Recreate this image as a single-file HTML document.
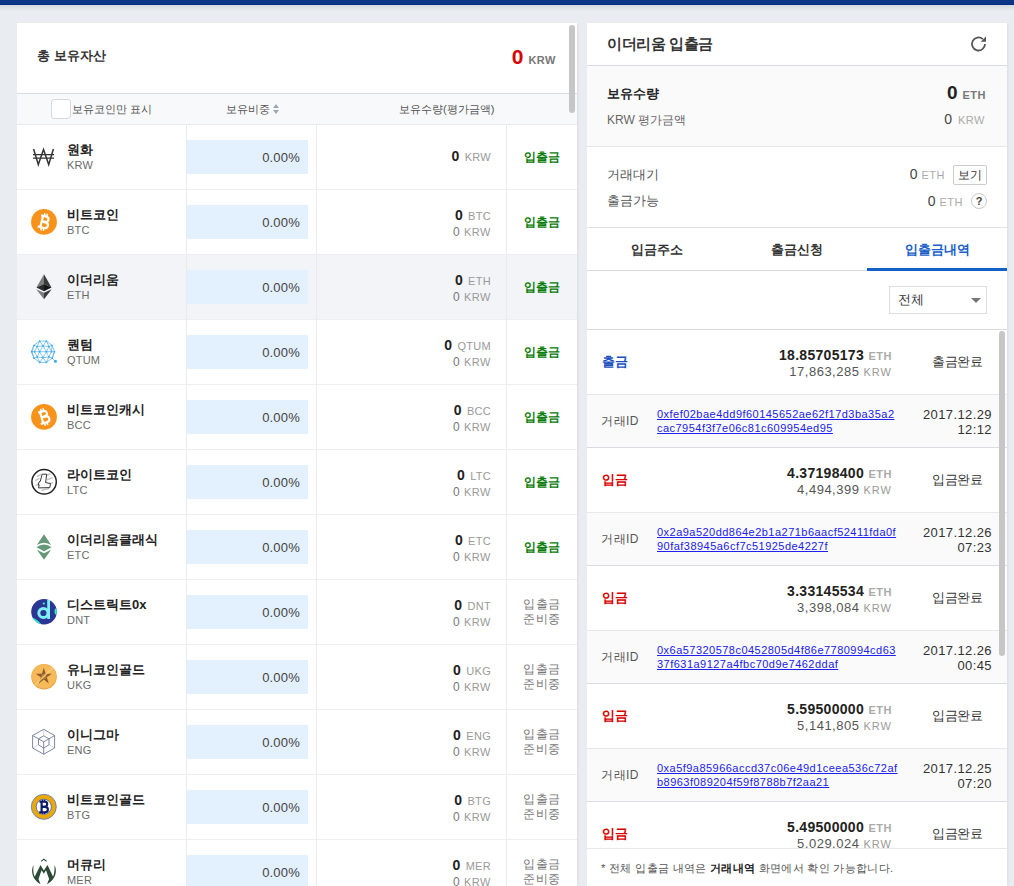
<!DOCTYPE html>
<html><head><meta charset="utf-8">
<style>
*{margin:0;padding:0;box-sizing:border-box}
html,body{width:1014px;height:886px;overflow:hidden}
body{background:#e9ecf1;font-family:"Liberation Sans",sans-serif;color:#333;position:relative}
.topbar{position:absolute;left:0;top:0;width:1014px;height:5px;background:#0b3585;border-bottom:1px solid #002b85}
.topshadow{position:absolute;left:0;top:5px;width:1014px;height:6px;background:linear-gradient(#d5d8de,#e9ecf1)}
.panel{position:absolute;background:#fff;overflow:hidden;box-shadow:2px 0 2px -1px rgba(40,50,80,0.08)}
#left{left:17px;top:23px;width:560px;height:863px}
#right{left:587px;top:23px;width:420px;height:863px}
/* left */
.lh{position:absolute;left:0;top:0;width:560px;height:71px;border-bottom:1px solid #d8dbe0}
.lh .ttl{position:absolute;left:20px;top:24px;font-size:13px;letter-spacing:0px;word-spacing:0px;font-weight:bold;color:#333;line-height:18px}
.lh .tot{position:absolute;right:21px;top:22px;line-height:24px;white-space:nowrap}
.lh .tot b{font-size:21px;color:#d80000}
.lh .tot span{font-size:11px;color:#777;font-weight:bold;margin-left:5px;letter-spacing:0.5px}
.th{position:absolute;left:0;top:71px;width:560px;height:31px;background:#f8f9fb;border-bottom:1px solid #e9ebef;font-size:11px;color:#555;line-height:30px}
.cb{position:absolute;left:34px;top:5px;width:20px;height:20px;border:1px solid #d6d8de;border-radius:3px;background:#fff}
.th .c1{position:absolute;left:55px;top:0}
.th .c2{position:absolute;left:209px;top:0}
.th .c3{position:absolute;left:382px;top:0}
.sort{display:inline-block;vertical-align:middle;margin-left:3px;width:6px;height:10px;position:relative;top:-1px}
.row{position:absolute;left:0;width:560px;height:65px;border-bottom:1px solid #edeef1}
.row.hl{background:#f3f4f8}
.row::before{content:"";position:absolute;left:169px;top:0;width:1px;height:64px;background:#e9eaf2}
.row::after{content:"";position:absolute;left:299px;top:0;width:1px;height:64px;background:#e9eaf2}
.row .vb{position:absolute;left:489px;top:0;width:1px;height:64px;background:#e9eaf2}
.ic{position:absolute;left:11px;top:16px;width:32px;height:32px}.ic svg{display:block}
.nm{position:absolute;left:50px;top:17px;font-size:13px;font-weight:bold;color:#222;line-height:15px;letter-spacing:0px;white-space:nowrap}
.tk{position:absolute;left:50px;top:34px;font-size:11px;color:#6a6a6a;line-height:13px;letter-spacing:0.2px}
.bar{position:absolute;left:170px;top:15px;width:121px;height:34px;background:#e3f0fd;text-align:right;padding-right:8px;font-size:13px;line-height:36px;color:#444;letter-spacing:0.2px}
.q1{position:absolute;right:86px;top:17px;font-size:11px;color:#999;line-height:16px;white-space:nowrap;letter-spacing:0.3px}
.q1 b{font-size:14px;color:#222;letter-spacing:0}
.q1.single{top:23px}
.q2{position:absolute;right:86px;top:35px;font-size:12px;color:#777;line-height:15px;white-space:nowrap;letter-spacing:0.5px}
.q2 .u{font-size:11px;color:#999}
.q1 .u{margin-left:2px}
.act{position:absolute;left:490px;width:70px;text-align:center;font-size:12px;line-height:15px}
.act.on{top:25px;color:#0a7d0a;font-weight:bold}
.act.off{top:17px;color:#777;letter-spacing:0.5px}
.sb{position:absolute;border-radius:3px;background:#c6c6c6}
/* right */
.rh{position:absolute;left:0;top:0;width:420px;height:43px;border-bottom:1px solid #d8dbe0}
.rh .ttl{position:absolute;left:20px;top:12px;font-size:15px;letter-spacing:-0.4px;font-weight:bold;line-height:18px;color:#333}
.refresh{position:absolute;left:383px;top:12px}
.hold{position:absolute;left:0;top:43px;width:420px;height:81px;background:#fafafa;border-bottom:1px solid #e5e7eb}
.hold .l1{position:absolute;left:20px;top:19px;font-size:13px;font-weight:bold;line-height:17px;color:#222}
.hold .l2{position:absolute;left:20px;top:46px;font-size:12px;line-height:16px;color:#666}
.hold .r1{position:absolute;right:21px;top:16px;line-height:22px;white-space:nowrap}
.hold .r1 b{font-size:19px;color:#222}
.hold .r1 span{font-size:11px;color:#777;font-weight:bold;margin-left:5px;letter-spacing:0.5px}
.hold .r2{position:absolute;right:22px;top:44px;line-height:18px;white-space:nowrap;font-size:14px;color:#444}
.hold .r2 span{font-size:11px;color:#aaa;margin-left:6px;letter-spacing:0.5px}
.pend{position:absolute;left:0;top:124px;width:420px;height:81px;border-bottom:1px solid #dfe1e6}
.pend .l{position:absolute;left:20px;font-size:13px;color:#555;line-height:16px}
.pend .v{position:absolute;font-size:14px;color:#444;line-height:18px;white-space:nowrap}
.pend .v span{font-size:11px;color:#aaa;margin-left:4px;letter-spacing:0.5px}
.btn{position:absolute;left:366px;top:18px;width:34px;height:20px;border:1px solid #ccc;border-radius:2px;font-size:12px;line-height:18px;text-align:center;color:#333;background:#fff}
.q{position:absolute;left:384px;top:46px;width:16px;height:16px;border:1px solid #c8c8c8;border-radius:50%;font-size:11px;font-weight:bold;line-height:14px;text-align:center;color:#444}
.tabs{position:absolute;left:0;top:205px;width:420px;height:43px;border-bottom:1px solid #d8dbe0}
.tab{position:absolute;top:0;width:140px;height:42px;text-align:center;font-size:13px;font-weight:bold;line-height:43px;color:#333}
.tab.on{color:#1a5ec8;border-bottom:3px solid #1261c4;height:43px}
.filt{position:absolute;left:0;top:248px;width:420px;height:59px;border-bottom:1px solid #d8dbe0}
.sel{position:absolute;left:302px;top:15px;width:98px;height:28px;border:1px solid #ddd;font-size:13px;line-height:26px;padding-left:8px;color:#333;background:#fff}
.sel::after{content:"";position:absolute;left:81px;top:11px;border-left:5px solid transparent;border-right:5px solid transparent;border-top:5px solid #777}
.list{position:absolute;left:0;top:307px;width:420px;height:518px;overflow:hidden}
.tx{position:absolute;left:0;width:420px;height:65px;background:#fff;border-bottom:1px solid #e8e8ea}
.tx .tt{position:absolute;left:15px;top:24px;font-size:13px;font-weight:bold;line-height:16px}
.tt.out{color:#1a4fc0}.tt.in{color:#d80000}
.amt{position:absolute;right:115px;top:16px;line-height:18px;white-space:nowrap}
.amt b{font-size:14px;color:#222;letter-spacing:0.3px}
.amt .eu{font-size:11px;font-weight:bold;color:#aaa;letter-spacing:0.5px}
.krw{position:absolute;right:115px;top:34px;line-height:16px;white-space:nowrap;font-size:13px;color:#555;letter-spacing:0.5px}
.krw .ku{font-size:11px;color:#999;letter-spacing:1px}
.st{position:absolute;left:326px;width:88px;top:24px;text-align:center;font-size:13px;line-height:16px;color:#333;letter-spacing:-0.5px}
.txid{position:absolute;left:0;width:420px;height:53px;background:#fafafa;border-bottom:1px solid #d8dbe0}
.idl{position:absolute;left:14px;top:19px;font-size:12px;color:#555;line-height:14px;letter-spacing:0.5px}
.idv{position:absolute;left:70px;top:12px;font-size:11px;line-height:14px;letter-spacing:0.47px}
.idv a{color:#2020ee;text-decoration:underline}
.dt{position:absolute;right:15px;top:12px;text-align:right;font-size:13px;line-height:15px;color:#333;letter-spacing:0.4px}
.foot{position:absolute;left:0;top:825px;width:420px;height:38px;border-top:1px solid #e8e8ea;background:#fff;font-size:11.4px;letter-spacing:0.3px;color:#555;padding-left:14px;line-height:38px}
.foot b{color:#222}
</style></head><body>
<div class="topbar"></div><div class="topshadow"></div>
<div class="panel" id="left">
 <div class="lh"><div class="ttl">총 보유자산</div><div class="tot"><b>0</b><span>KRW</span></div></div>
 <div class="th"><div class="cb"></div><div class="c1">보유코인만 표시</div><div class="c2">보유비중<svg class="sort" viewBox="0 0 6 10"><path d="M3 0 L6 4 H0Z M3 10 L6 6 H0Z" fill="#a0a5b5"/></svg></div><div class="c3">보유수량(평가금액)</div></div>
<div class="row" style="top:102px">
<div class="vb"></div><div class="ic"><svg width="32" height="32" viewBox="0 0 32 32"><g fill="none" stroke="#333" stroke-width="1.5"><path d="M5.6 8 L10.3 23.6 L15.5 8.6 L20.7 23.6 L25.4 8"/></g><path d="M5 13.6 H26 M5 17.1 H26" stroke="#333" stroke-width="1.4"/></svg></div>
<div class="nm">원화</div><div class="tk">KRW</div>
<div class="bar"><span>0.00%</span></div>
<div class="q1 single"><b>0</b> <span class="u">KRW</span></div>
<div class="act on">입출금</div>
</div>
<div class="row" style="top:167px">
<div class="vb"></div><div class="ic"><svg width="32" height="32" viewBox="0 0 32 32"><circle cx="16" cy="15.9" r="12.9" fill="#f7931a"/><g transform="rotate(14 16 16)" fill="none" stroke="#fff" stroke-width="2.2" stroke-linecap="butt">
<path d="M13.6 9.8 V22.2"/>
<path d="M11.6 10.2 H17 Q19.8 10.2 19.8 12.9 Q19.8 15.6 17 15.6 H13.5"/>
<path d="M13.5 16 H17.6 Q20.6 16 20.6 18.9 Q20.6 21.8 17.6 21.8 H11"/>
<path d="M14.9 7.2 V9.5 M17.4 7.2 V9.5 M14.9 22.5 V24.8 M17.4 22.5 V24.8" stroke-width="1.5"/>
</g></svg></div>
<div class="nm">비트코인</div><div class="tk">BTC</div>
<div class="bar"><span>0.00%</span></div>
<div class="q1"><b>0</b> <span class="u">BTC</span></div><div class="q2">0 <span class="u">KRW</span></div>
<div class="act on">입출금</div>
</div>
<div class="row hl" style="top:232px">
<div class="vb"></div><div class="ic"><svg width="32" height="32" viewBox="0 0 32 32"><path d="M16 3.3 L8.4 16.5 L16 13Z" fill="#7d7d7d"/><path d="M16 3.3 L23.5 16.5 L16 13Z" fill="#393939"/><path d="M8.4 16.5 L16 13 L16 20.3Z" fill="#2a2a2a"/><path d="M23.5 16.5 L16 13 L16 20.3Z" fill="#141414"/><path d="M8.2 18.2 L16 21.7 L16 28.2Z" fill="#7d7d7d"/><path d="M23.7 18.2 L16 21.7 L16 28.2Z" fill="#393939"/></svg></div>
<div class="nm">이더리움</div><div class="tk">ETH</div>
<div class="bar"><span>0.00%</span></div>
<div class="q1"><b>0</b> <span class="u">ETH</span></div><div class="q2">0 <span class="u">KRW</span></div>
<div class="act on">입출금</div>
</div>
<div class="row" style="top:297px">
<div class="vb"></div><div class="ic"><svg width="32" height="32" viewBox="0 0 32 32"><path d="M11.6 5.1L18.4 5.1M18.4 5.1L24 9.3M24 9.3L26.5 15.7M26.5 15.7L24.2 22.2M24.2 22.2L18.4 26.4M18.4 26.4L11.7 26.4M11.7 26.4L6 22.2M6 22.2L3.6 15.7M3.6 15.7L6.1 9.3M6.1 9.3L11.6 5.1M11.6 5.1L9.2 10.5M11.6 5.1L15 9.9M18.4 5.1L15 9.9M18.4 5.1L20.9 10.5M6.1 9.3L9.2 10.5M24 9.3L20.9 10.5M9.2 10.5L6.5 15.7M9.2 10.5L11.6 15.7M15 9.9L11.6 15.7M15 9.9L18.4 15.7M20.9 10.5L18.4 15.7M20.9 10.5L23.5 15.7M3.6 15.7L6.5 15.7M6.5 15.7L11.6 15.7M11.6 15.7L18.4 15.7M18.4 15.7L23.5 15.7M23.5 15.7L26.5 15.7M6.5 15.7L9.2 21M11.6 15.7L9.2 21M11.6 15.7L15 21.6M18.4 15.7L15 21.6M18.4 15.7L20.9 21M23.5 15.7L20.9 21M6 22.2L9.2 21M24.2 22.2L20.9 21M9.2 21L11.7 26.4M15 21.6L11.7 26.4M15 21.6L18.4 26.4M20.9 21L18.4 26.4M9.2 10.5L15 9.9M15 9.9L20.9 10.5M9.2 21L15 21.6M15 21.6L20.9 21M6.1 9.3L3.6 15.7M24 9.3L23.5 15.7M3.6 15.7L6 22.2M26.5 15.7L24.2 22.2M24.2 22.2L27.4 25.3" fill="none" stroke="#3fa8e6" stroke-width="0.75" opacity="0.85"/><g fill="#3fa8e6"><circle cx="11.6" cy="5.1" r="0.85"/><circle cx="18.4" cy="5.1" r="0.85"/><circle cx="6.1" cy="9.3" r="0.85"/><circle cx="24" cy="9.3" r="0.85"/><circle cx="9.2" cy="10.5" r="0.85"/><circle cx="15" cy="9.9" r="0.85"/><circle cx="20.9" cy="10.5" r="0.85"/><circle cx="3.6" cy="15.7" r="0.85"/><circle cx="6.5" cy="15.7" r="0.85"/><circle cx="11.6" cy="15.7" r="0.85"/><circle cx="18.4" cy="15.7" r="0.85"/><circle cx="23.5" cy="15.7" r="0.85"/><circle cx="26.5" cy="15.7" r="0.85"/><circle cx="9.2" cy="21" r="0.85"/><circle cx="15" cy="21.6" r="0.85"/><circle cx="20.9" cy="21" r="0.85"/><circle cx="6" cy="22.2" r="0.85"/><circle cx="24.2" cy="22.2" r="0.85"/><circle cx="11.7" cy="26.4" r="0.85"/><circle cx="18.4" cy="26.4" r="0.85"/><circle cx="27.4" cy="25.3" r="1.5"/></g></svg></div>
<div class="nm">퀀텀</div><div class="tk">QTUM</div>
<div class="bar"><span>0.00%</span></div>
<div class="q1"><b>0</b> <span class="u">QTUM</span></div><div class="q2">0 <span class="u">KRW</span></div>
<div class="act on">입출금</div>
</div>
<div class="row" style="top:362px">
<div class="vb"></div><div class="ic"><svg width="32" height="32" viewBox="0 0 32 32"><circle cx="16" cy="15.9" r="12.9" fill="#f7931a"/><g transform="rotate(-16 16 16)" fill="none" stroke="#fff" stroke-width="2.2" stroke-linecap="butt">
<path d="M13.6 9.8 V22.2"/>
<path d="M11.6 10.2 H17 Q19.8 10.2 19.8 12.9 Q19.8 15.6 17 15.6 H13.5"/>
<path d="M13.5 16 H17.6 Q20.6 16 20.6 18.9 Q20.6 21.8 17.6 21.8 H11"/>
<path d="M14.9 7.2 V9.5 M17.4 7.2 V9.5 M14.9 22.5 V24.8 M17.4 22.5 V24.8" stroke-width="1.5"/>
</g></svg></div>
<div class="nm">비트코인캐시</div><div class="tk">BCC</div>
<div class="bar"><span>0.00%</span></div>
<div class="q1"><b>0</b> <span class="u">BCC</span></div><div class="q2">0 <span class="u">KRW</span></div>
<div class="act on">입출금</div>
</div>
<div class="row" style="top:427px">
<div class="vb"></div><div class="ic"><svg width="32" height="32" viewBox="0 0 32 32"><circle cx="16.1" cy="15.8" r="12.2" fill="#fff" stroke="#222" stroke-width="1.5"/><g stroke="#c4c4c4" stroke-width="1.4" stroke-linecap="round" fill="none"><path d="M7.5 14.3 L11 12.6 M8.2 19.2 L10.4 18 M9.5 10.3 L13 8.3 M19.5 13.6 L24.2 11.8 M20.5 18.3 L24.5 16.6 M14 24.3 L20.5 22.6 M19 9 L22 8"/></g><path d="M14.2 8.2 L18.7 8.2 L17.6 16.6 L22.5 17.5 L21.8 21.6 L10.5 21.9 L11.2 18.9 L10.3 19.1 L11 15.9 L12.2 15.5 Z" fill="#fff" stroke="#222" stroke-width="0.9" stroke-linejoin="round"/></svg></div>
<div class="nm">라이트코인</div><div class="tk">LTC</div>
<div class="bar"><span>0.00%</span></div>
<div class="q1"><b>0</b> <span class="u">LTC</span></div><div class="q2">0 <span class="u">KRW</span></div>
<div class="act on">입출금</div>
</div>
<div class="row" style="top:492px">
<div class="vb"></div><div class="ic"><svg width="32" height="32" viewBox="0 0 32 32"><g fill="#659878"><path d="M16 3.2 L8.9 14 Q12 12 16 11.8 Q20 12 23.1 14Z"/><path d="M8.5 16.3 Q12 13.8 16 13.5 Q20 13.8 23.5 16.3 L16 20.2Z"/><path d="M8.9 18.8 L16 22.3 L23.1 18.8 L16 28.8Z"/></g></svg></div>
<div class="nm">이더리움클래식</div><div class="tk">ETC</div>
<div class="bar"><span>0.00%</span></div>
<div class="q1"><b>0</b> <span class="u">ETC</span></div><div class="q2">0 <span class="u">KRW</span></div>
<div class="act on">입출금</div>
</div>
<div class="row" style="top:557px">
<div class="vb"></div><div class="ic"><svg width="32" height="32" viewBox="0 0 32 32"><defs><clipPath id="dc"><circle cx="16" cy="15.8" r="12.8"/></clipPath></defs><circle cx="16" cy="15.8" r="12.8" fill="#2b3594"/><g clip-path="url(#dc)" fill="#2ff0c8"><path d="M2 21 Q9 22.5 14.5 29.5 L2 30Z"/><ellipse cx="28.5" cy="15.5" rx="2" ry="3.3"/></g><circle cx="15.4" cy="17" r="4.6" fill="none" stroke="#7cf0f4" stroke-width="3"/><path d="M20.6 4 V23" stroke="#7cf0f4" stroke-width="2.8"/><ellipse cx="15.8" cy="7.5" rx="1.2" ry="0.9" fill="#2ff0c8"/></svg></div>
<div class="nm">디스트릭트0x</div><div class="tk">DNT</div>
<div class="bar"><span>0.00%</span></div>
<div class="q1"><b>0</b> <span class="u">DNT</span></div><div class="q2">0 <span class="u">KRW</span></div>
<div class="act off">입출금<br>준비중</div>
</div>
<div class="row" style="top:622px">
<div class="vb"></div><div class="ic"><svg width="32" height="32" viewBox="0 0 32 32"><circle cx="16" cy="15.8" r="12.8" fill="#e7a444"/><circle cx="16" cy="15.3" r="12.1" fill="#f6bb58"/><path d="M15.8 6.8 L17.7 12.7 L23.9 12.7 L18.8 16.3 L20.8 22.4 L15.8 18.6 L10.8 22.4 L12.8 16.3 L7.7 12.7 L13.9 12.7Z" fill="#8e5c2a"/><circle cx="15.8" cy="15.4" r="2.6" fill="#c48a45" opacity="0.7"/><path d="M6.5 24.5 L25 6.5" stroke="#f8cd7c" stroke-width="1.7" opacity="0.85"/></svg></div>
<div class="nm">유니코인골드</div><div class="tk">UKG</div>
<div class="bar"><span>0.00%</span></div>
<div class="q1"><b>0</b> <span class="u">UKG</span></div><div class="q2">0 <span class="u">KRW</span></div>
<div class="act off">입출금<br>준비중</div>
</div>
<div class="row" style="top:687px">
<div class="vb"></div><div class="ic"><svg width="32" height="32" viewBox="0 0 32 32"><g fill="none" stroke="#707c98" stroke-width="0.9" stroke-linejoin="round"><path d="M15.7 3.3 L26.6 9.5 V22 L15.7 28.2 L4.6 22 V9.5Z"/><path d="M10.5 12.8 L15.7 9.8 L21 12.8 L15.7 15.8Z M10.5 12.8 V18.8 L15.7 22 L21 18.8 V12.8 M15.7 15.8 V28.2 M4.6 9.5 L10.5 12.8 M26.6 9.5 L21 12.8"/><path d="M15.7 3.3 V9.8 M4.6 22 L10.5 18.8 M26.6 22 L21 18.8" opacity="0.35"/></g></svg></div>
<div class="nm">이니그마</div><div class="tk">ENG</div>
<div class="bar"><span>0.00%</span></div>
<div class="q1"><b>0</b> <span class="u">ENG</span></div><div class="q2">0 <span class="u">KRW</span></div>
<div class="act off">입출금<br>준비중</div>
</div>
<div class="row" style="top:752px">
<div class="vb"></div><div class="ic"><svg width="32" height="32" viewBox="0 0 32 32"><circle cx="15.8" cy="15.8" r="12.5" fill="#eba809" stroke="#5577c4" stroke-width="0.8"/><circle cx="15.8" cy="15.8" r="7.6" fill="#fff" stroke="#3a5cb0" stroke-width="0.8"/><g fill="none" stroke="#0e1a6a"><path d="M13.6 10.5 V21.5" stroke-width="2.2"/><path d="M11.5 10.6 H16.6 Q19.2 10.6 19.2 13.1 Q19.2 15.7 16.6 15.7 H13.5" stroke-width="2.1"/><path d="M13.5 15.9 H17 Q19.9 15.9 19.9 18.6 Q19.9 21.4 17 21.4 H11.2" stroke-width="2.1"/><path d="M14.6 8.8 V10.6 M16.6 8.8 V10.6 M14.6 21.4 V23 M16.6 21.4 V23" stroke-width="1.1"/></g></svg></div>
<div class="nm">비트코인골드</div><div class="tk">BTG</div>
<div class="bar"><span>0.00%</span></div>
<div class="q1"><b>0</b> <span class="u">BTG</span></div><div class="q2">0 <span class="u">KRW</span></div>
<div class="act off">입출금<br>준비중</div>
</div>
<div class="row" style="top:817px">
<div class="vb"></div><div class="ic"><svg width="32" height="34" viewBox="0 0 32 34" style="margin-top:-4px"><path d="M5.5 13 C2.5 19 4 27 12.5 32.3 L10.5 27 L13.6 18.3 L15.8 21.8 L18 18.3 L21.1 27 L19 32.3 C28 27 29.5 19 26.5 13 C26.8 19 26 23 25 24.5 L19.5 13 L15.8 18.6 L12.5 13 L6.8 24.5 C5.6 23 5 19 5.5 13Z" fill="#2d4a36"/><path d="M13.2 9.4 L15.8 7.2 L18.7 9.4" fill="none" stroke="#2d4a36" stroke-width="1.1"/></svg></div>
<div class="nm">머큐리</div><div class="tk">MER</div>
<div class="bar"><span>0.00%</span></div>
<div class="q1"><b>0</b> <span class="u">MER</span></div><div class="q2">0 <span class="u">KRW</span></div>
<div class="act off">입출금<br>준비중</div>
</div>
 <div class="sb" style="left:552px;top:2px;width:6px;height:88px"></div>
</div>
<div class="panel" id="right">
 <div class="rh"><div class="ttl">이더리움 입출금</div>
  <svg class="refresh" width="18" height="18" viewBox="0 0 18 18"><path d="M15 9 A6.5 6.5 0 1 1 12.8 4.1" fill="none" stroke="#555" stroke-width="1.8"/><path d="M16 1.5 V6.8 H10.7Z" fill="#555"/></svg>
 </div>
 <div class="hold"><div class="l1">보유수량</div><div class="l2">KRW 평가금액</div>
  <div class="r1"><b>0</b><span>ETH</span></div><div class="r2">0<span>KRW</span></div></div>
 <div class="pend"><div class="l" style="top:20px">거래대기</div><div class="l" style="top:46px">출금가능</div>
  <div class="v" style="right:62px;top:18px">0<span>ETH</span></div><div class="btn">보기</div>
  <div class="v" style="right:44px;top:45px">0<span>ETH</span></div><div class="q">?</div>
 </div>
 <div class="tabs"><div class="tab" style="left:0">입금주소</div><div class="tab" style="left:140px">출금신청</div><div class="tab on" style="left:280px">입출금내역</div></div>
 <div class="filt"><div class="sel">전체</div></div>
 <div class="list">
<div class="tx" style="top:0px">
<div class="tt out">출금</div>
<div class="amt"><b>18.85705173</b> <span class="eu">ETH</span></div>
<div class="krw">17,863,285 <span class="ku">KRW</span></div>
<div class="st">출금완료</div>
</div>
<div class="txid" style="top:65px">
<div class="idl">거래ID</div>
<div class="idv"><a>0xfef02bae4dd9f60145652ae62f17d3ba35a2</a><br><a>cac7954f3f7e06c81c609954ed95</a></div>
<div class="dt">2017.12.29<br>12:12</div>
</div>
<div class="tx" style="top:118px">
<div class="tt in">입금</div>
<div class="amt"><b>4.37198400</b> <span class="eu">ETH</span></div>
<div class="krw">4,494,399 <span class="ku">KRW</span></div>
<div class="st">입금완료</div>
</div>
<div class="txid" style="top:183px">
<div class="idl">거래ID</div>
<div class="idv"><a>0x2a9a520dd864e2b1a271b6aacf52411fda0f</a><br><a>90faf38945a6cf7c51925de4227f</a></div>
<div class="dt">2017.12.26<br>07:23</div>
</div>
<div class="tx" style="top:236px">
<div class="tt in">입금</div>
<div class="amt"><b>3.33145534</b> <span class="eu">ETH</span></div>
<div class="krw">3,398,084 <span class="ku">KRW</span></div>
<div class="st">입금완료</div>
</div>
<div class="txid" style="top:301px">
<div class="idl">거래ID</div>
<div class="idv"><a>0x6a57320578c0452805d4f86e7780994cd63</a><br><a>37f631a9127a4fbc70d9e7462ddaf</a></div>
<div class="dt">2017.12.26<br>00:45</div>
</div>
<div class="tx" style="top:354px">
<div class="tt in">입금</div>
<div class="amt"><b>5.59500000</b> <span class="eu">ETH</span></div>
<div class="krw">5,141,805 <span class="ku">KRW</span></div>
<div class="st">입금완료</div>
</div>
<div class="txid" style="top:419px">
<div class="idl">거래ID</div>
<div class="idv"><a>0xa5f9a85966accd37c06e49d1ceea536c72af</a><br><a>b8963f089204f59f8788b7f2aa21</a></div>
<div class="dt">2017.12.25<br>07:20</div>
</div>
<div class="tx" style="top:472px">
<div class="tt in">입금</div>
<div class="amt"><b>5.49500000</b> <span class="eu">ETH</span></div>
<div class="krw">5,029,024 <span class="ku">KRW</span></div>
<div class="st">입금완료</div>
</div>
 </div>
 <div class="sb" style="left:412px;top:308px;width:6px;height:325px"></div>
 <div class="foot">* 전체 입출금 내역은 <b>거래내역</b> 화면에서 확인 가능합니다.</div>
</div>
</body></html>
